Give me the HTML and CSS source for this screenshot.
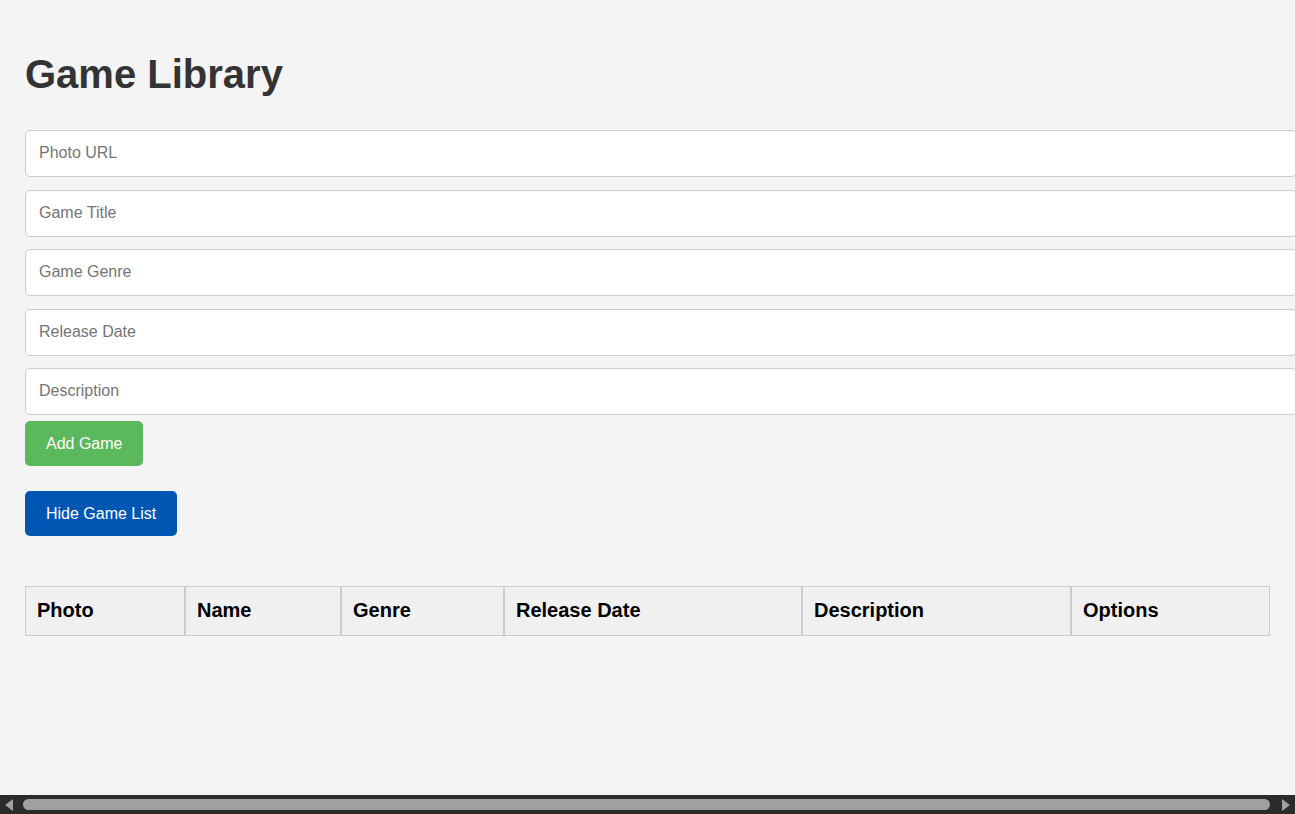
FILE: index.html
```html
<!DOCTYPE html>
<html lang="en">
<head>
<meta charset="utf-8">
<title>Game Library</title>
<link rel="stylesheet" href="styles.css">
</head>
<body>
<div class="app">
  <h1 class="title">Game Library</h1>
  <form class="game-form">
    <input class="field" type="text" placeholder="Photo URL">
    <input class="field" type="text" placeholder="Game Title">
    <input class="field" type="text" placeholder="Game Genre">
    <input class="field" type="text" placeholder="Release Date">
    <input class="field" type="text" placeholder="Description">
    <button class="btn btn-add" type="button">Add Game</button>
  </form>
  <button class="btn btn-toggle" type="button">Hide Game List</button>
  <table class="game-table">
    <thead>
      <tr>
        <th class="col-photo">Photo</th>
        <th class="col-name">Name</th>
        <th class="col-genre">Genre</th>
        <th class="col-date">Release Date</th>
        <th class="col-desc">Description</th>
        <th class="col-options">Options</th>
      </tr>
    </thead>
    <tbody></tbody>
  </table>
</div>
<div class="hscroll" aria-hidden="true">
  <span class="hscroll-btn"><span class="arrow arrow-left"></span></span>
  <span class="hscroll-track"><span class="hscroll-thumb"></span></span>
  <span class="hscroll-btn"><span class="arrow arrow-right"></span></span>
</div>
</body>
</html>
```

FILE: styles.css
```css
html, body {
  background: #f4f4f4;
}

body {
  margin: 0;
  font-family: "Liberation Sans", Arial, sans-serif;
  color: #333;
}

.app {
  padding: 0 25px 25px 25px;
}

.title {
  font-size: 40px;
  line-height: 46px;
  font-weight: bold;
  color: #333;
  margin: 51px 0 33px 0;
}

.game-form {
  display: flex;
  flex-direction: column;
  align-items: flex-start;
}

.field {
  display: block;
  width: 100%;
  padding: 12px 12px 14px 13px;
  line-height: 19px;
  font-size: 16px;
  font-family: "Liberation Sans", Arial, sans-serif;
  color: #333;
  background: #fff;
  border: 1px solid #ccc;
  border-radius: 5px;
  margin: 0 0 12.5px 0;
  outline: none;
}

.field:last-of-type {
  margin-bottom: 6px;
}

.field::placeholder {
  color: #757575;
}

.btn {
  display: block;
  border: none;
  border-radius: 5px;
  padding: 13px 21px;
  font-size: 16px;
  line-height: 19px;
  font-family: "Liberation Sans", Arial, sans-serif;
  color: #fff;
  cursor: pointer;
}

.btn-add {
  background: #5cb85c;
}

.btn-toggle {
  background: #0056b3;
  margin: 25px 0 50px 0;
}

.game-table {
  width: 100%;
  table-layout: fixed;
  border-collapse: separate;
  border-spacing: 0;
}

.game-table th {
  box-sizing: border-box;
  text-align: left;
  font-size: 20px;
  line-height: 24px;
  font-weight: bold;
  color: #000;
  background: #f0f0f0;
  border: 1px solid #ccc;
  padding: 11px 10px 13px 11px;
}

.col-photo { width: 160px; }
.col-name { width: 156px; }
.col-genre { width: 163px; }
.col-date { width: 298px; }
.col-desc { width: 269px; }
.col-options { width: 199px; }

/* imitation of the window's horizontal scrollbar */
.hscroll {
  position: fixed;
  left: 0;
  right: 0;
  bottom: 0;
  height: 19px;
  display: flex;
  align-items: center;
  background: #2b2b2b;
}

.hscroll-btn {
  flex: 0 0 19px;
  height: 19px;
  display: flex;
  align-items: center;
  justify-content: center;
}

.hscroll-track {
  flex: 1;
  height: 19px;
  display: flex;
  align-items: center;
  padding: 0 6px 0 4px;
}

.hscroll-thumb {
  flex: 1;
  height: 11px;
  border-radius: 6px;
  background: #a0a0a0;
}

.arrow {
  width: 0;
  height: 0;
  border-top: 6px solid transparent;
  border-bottom: 6px solid transparent;
}

.arrow-left {
  border-right: 8px solid #a0a0a0;
  margin-left: -1px;
}

.arrow-right {
  border-left: 8px solid #a0a0a0;
  margin-left: 1px;
}
```
